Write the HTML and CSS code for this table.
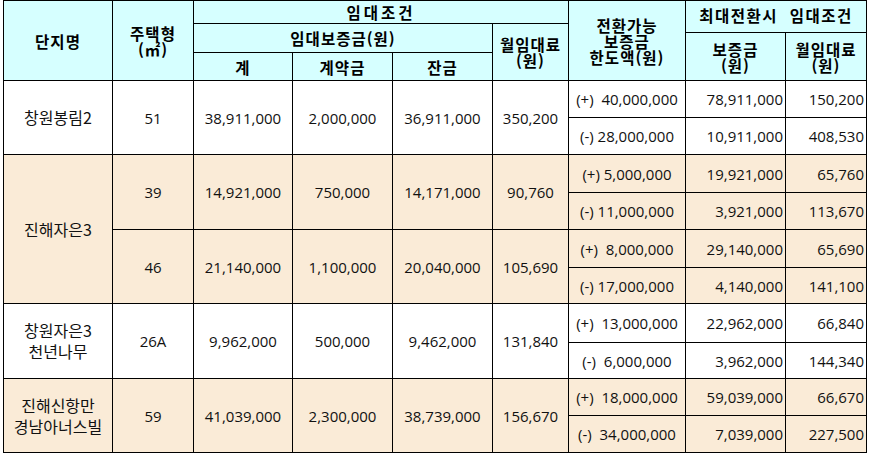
FILE: index.html
```html
<!DOCTYPE html>
<html lang="ko">
<head>
<meta charset="utf-8">
<title>임대조건</title>
<link rel="stylesheet" href="styles.css">
</head>
<body>
<div class="sheet">
  <!-- header -->
  <div class="h r4">단지명</div>
  <div class="h r4">주택형<br>(㎡)</div>
  <div class="h c4 wide">임대조건</div>
  <div class="h r4">전환가능<br>보증금<br>한도액(원)</div>
  <div class="h c2 r2 pre raise">최대전환시  임대조건</div>
  <div class="h c3 r2">임대보증금(원)</div>
  <div class="h r3">월임대료<br>(원)</div>
  <div class="h r2">보증금<br>(원)</div>
  <div class="h r2">월임대료<br>(원)</div>
  <div class="h">계</div>
  <div class="h">계약금</div>
  <div class="h">잔금</div>

  <!-- 창원봉림2 -->
  <div class="d k r2">창원봉림2</div>
  <div class="d r2">51</div>
  <div class="d r2">38,911,000</div>
  <div class="d r2">2,000,000</div>
  <div class="d r2">36,911,000</div>
  <div class="d r2">350,200</div>
  <div class="d pre">(+)  40,000,000</div>
  <div class="d rt">78,911,000</div>
  <div class="d rt">150,200</div>
  <div class="d pre">(-) 28,000,000</div>
  <div class="d rt">10,911,000</div>
  <div class="d rt">408,530</div>

  <!-- 진해자은3 -->
  <div class="d k b r4">진해자은3</div>
  <div class="d b r2">39</div>
  <div class="d b r2">14,921,000</div>
  <div class="d b r2">750,000</div>
  <div class="d b r2">14,171,000</div>
  <div class="d b r2">90,760</div>
  <div class="d b pre">(+) 5,000,000</div>
  <div class="d b rt">19,921,000</div>
  <div class="d b rt">65,760</div>
  <div class="d b pre">(-) 11,000,000</div>
  <div class="d b rt">3,921,000</div>
  <div class="d b rt">113,670</div>
  <div class="d b r2">46</div>
  <div class="d b r2">21,140,000</div>
  <div class="d b r2">1,100,000</div>
  <div class="d b r2">20,040,000</div>
  <div class="d b r2">105,690</div>
  <div class="d b pre">(+)  8,000,000</div>
  <div class="d b rt">29,140,000</div>
  <div class="d b rt">65,690</div>
  <div class="d b pre">(-) 17,000,000</div>
  <div class="d b rt">4,140,000</div>
  <div class="d b rt">141,100</div>

  <!-- 창원자은3 천년나무 -->
  <div class="d k r2">창원자은3<br>천년나무</div>
  <div class="d r2">26A</div>
  <div class="d r2">9,962,000</div>
  <div class="d r2">500,000</div>
  <div class="d r2">9,462,000</div>
  <div class="d r2">131,840</div>
  <div class="d pre">(+)  13,000,000</div>
  <div class="d rt">22,962,000</div>
  <div class="d rt">66,840</div>
  <div class="d pre">(-)  6,000,000</div>
  <div class="d rt">3,962,000</div>
  <div class="d rt">144,340</div>

  <!-- 진해신항만 경남아너스빌 -->
  <div class="d k b r2">진해신항만<br>경남아너스빌</div>
  <div class="d b r2">59</div>
  <div class="d b r2">41,039,000</div>
  <div class="d b r2">2,300,000</div>
  <div class="d b r2">38,739,000</div>
  <div class="d b r2">156,670</div>
  <div class="d b pre">(+)  18,000,000</div>
  <div class="d b rt">59,039,000</div>
  <div class="d b rt">66,670</div>
  <div class="d b pre">(-)  34,000,000</div>
  <div class="d b rt">7,039,000</div>
  <div class="d b rt">227,500</div>
</div>
</body>
</html>
```

FILE: styles.css
```css
html, body {
  margin: 0;
  padding: 0;
  background: #ffffff;
}

.sheet {
  margin-left: 3px;
  display: grid;
  width: max-content;
  grid-template-columns: 108px 80px 98px 99px 99px 75px 116px 99px 80px;
  grid-template-rows: 22px 8px 19px 27px 36px 36px 37px 36px 37px 35px 38px 35px 36px 36px;
  gap: 1px;
  padding: 1px;
  background: #000000;
  font-family: "Open Sans", "Noto Sans CJK KR", sans-serif;
  font-size: 15px;
  color: #111111;
}

.sheet > div {
  display: flex;
  align-items: center;
  justify-content: center;
  text-align: center;
  overflow: hidden;
  background: #ffffff;
}

.h {
  background: #d6ffff !important;
  font-family: "Noto Sans CJK KR", sans-serif;
  font-size: 15.5px;
  font-weight: 700;
  letter-spacing: 1px;
  line-height: 16px;
  color: #000000;
}

.wide {
  letter-spacing: 3px;
}

.raise {
  padding-bottom: 4px;
  letter-spacing: 1.5px;
}

.d {
  line-height: 20px;
}

.k {
  font-family: "Noto Sans CJK KR", sans-serif;
  font-size: 16px;
  line-height: 21px;
}

.b {
  background: #faebd7 !important;
}

.rt {
  justify-content: flex-end !important;
  padding-right: 2px;
}

.pre {
  white-space: pre;
}

.c2 { grid-column: span 2; }
.c3 { grid-column: span 3; }
.c4 { grid-column: span 4; }
.r2 { grid-row: span 2; }
.r3 { grid-row: span 3; }
.r4 { grid-row: span 4; }
```
